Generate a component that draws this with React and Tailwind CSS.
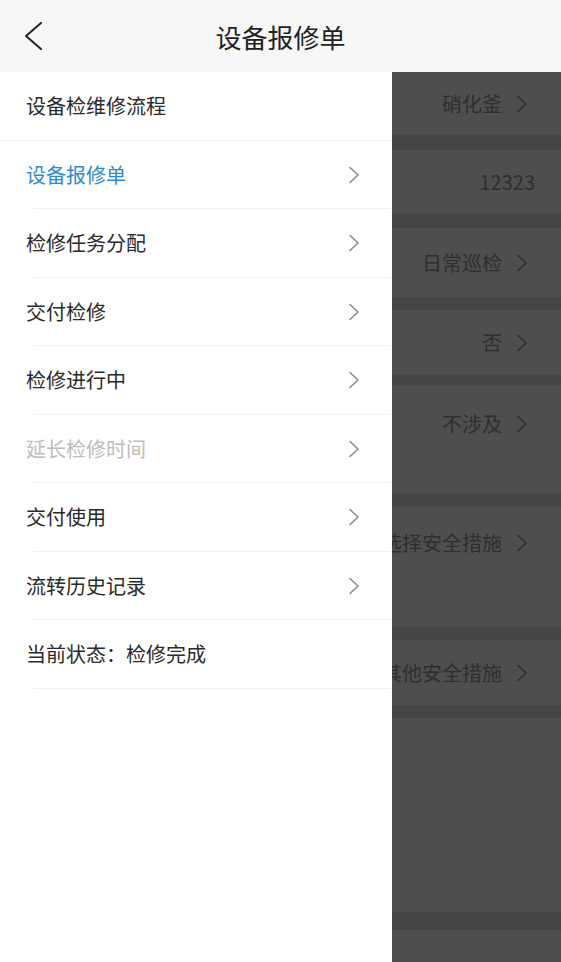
import React from 'react';

const FONT = { fontFamily: '"Noto Sans CJK SC", "Noto Sans", sans-serif' };

const Chevron = ({ className = '', stroke = '#8c8c8c' }) => (
  <svg className={className} width="12" height="18" viewBox="0 0 12 18" fill="none">
    <path d="M2 1.5 L10 9 L2 16.5" stroke={stroke} strokeWidth="1.6" strokeLinecap="round" strokeLinejoin="round" />
  </svg>
);

const menu = [
  { label: '设备检维修流程', arrow: false, full: true },
  { label: '设备报修单', arrow: true, tone: 'text-[#2b8ad6]' },
  { label: '检修任务分配', arrow: true },
  { label: '交付检修', arrow: true },
  { label: '检修进行中', arrow: true },
  { label: '延长检修时间', arrow: true, tone: 'text-[#bdbdbd]' },
  { label: '交付使用', arrow: true },
  { label: '流转历史记录', arrow: true },
  { label: '当前状态：检修完成', arrow: false },
];

// dimmed form behind the drawer
const backRows = [
  { h: 'h-[63px]', text: '硝化釜', arrow: true },
  { band: 'h-[15px]' },
  { h: 'h-[63px]', text: '12323', arrow: false },
  { band: 'h-[15px]' },
  { h: 'h-[69px]', text: '日常巡检', arrow: true },
  { band: 'h-[13px]' },
  { h: 'h-[65px]', text: '否', arrow: true },
  { band: 'h-[10px]' },
  { h: 'h-[108px]', text: '不涉及', arrow: true, top: 'pt-[24px]' },
  { band: 'h-[14px]' },
  { h: 'h-[120px]', text: '选择安全措施', arrow: true, top: 'pt-[21px]' },
  { band: 'h-[13px]' },
  { h: 'h-[65px]', text: '其他安全措施', arrow: true },
  { band: 'h-[13px]' },
  { h: 'h-[194px]' },
  { band: 'h-[18px]' },
  { h: 'h-[40px]' },
];

export default function App() {
  return (
    <div className="w-[561px] h-[962px] overflow-hidden bg-white flex flex-col" style={FONT}>
      {/* Header */}
      <div className="h-[72px] shrink-0 bg-[#f7f7f7] flex items-center">
        <div className="w-[70px] pl-[23px] flex items-center">
          <svg width="20" height="30" viewBox="0 0 20 30" fill="none">
            <path d="M18 2 L3 15 L18 28" stroke="#222" strokeWidth="2" strokeLinecap="round" strokeLinejoin="round" />
          </svg>
        </div>
        <div className="flex-1 pr-[70px] text-center text-[26px] text-[#222]">设备报修单</div>
      </div>

      <div className="flex flex-1 min-h-0">
        {/* Drawer */}
        <div className="w-[392px] shrink-0 bg-white flex flex-col">
          {menu.map((m, i) => (
            <div key={i} className={`h-[68.5px] shrink-0 flex items-center pl-[26px] pr-[32px] relative ${m.full ? 'border-b border-[#f0f0f0]' : ''}`}>
              <span className={`flex-1 text-[20px] ${m.tone || 'text-[#2a2a2a]'}`}>{m.label}</span>
              {m.arrow && <Chevron />}
              {!m.full && <div className="absolute left-[33px] right-[2px] bottom-0 h-px bg-[#f0f0f0]" />}
            </div>
          ))}
        </div>

        {/* Dimmed page */}
        <div className="flex-1 min-w-0 overflow-hidden flex flex-col bg-[#4e4e4e]">
          {backRows.map((r, i) =>
            r.band ? (
              <div key={i} className={`${r.band} shrink-0 bg-[#454545]`} />
            ) : (
              <div key={i} className={`${r.h} shrink-0 flex justify-end ${r.arrow ? 'pr-[33px]' : 'pr-[26px]'} ${r.top ? `items-start ${r.top}` : 'items-center'}`}>
                {r.text && (
                  <div className="flex items-center shrink-0 whitespace-nowrap">
                    <span className="text-[20px] text-[#2e2e2e]">{r.text}</span>
                    {r.arrow && <Chevron className="ml-[14px]" stroke="#2e2e2e" />}
                  </div>
                )}
              </div>
            )
          )}
        </div>
      </div>
    </div>
  );
}
